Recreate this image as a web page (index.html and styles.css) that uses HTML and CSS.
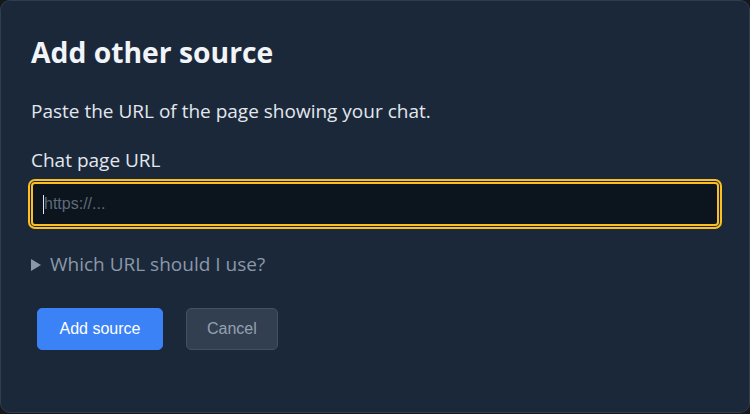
FILE: index.html
```html
<!DOCTYPE html>
<html lang="en">
<head>
<meta charset="utf-8">
<title>Add other source</title>
<link rel="stylesheet" href="styles.css">
</head>
<body>
<div class="dialog">
  <h2 class="title">Add other source</h2>
  <p class="desc">Paste the URL of the page showing your chat.</p>
  <label class="label" for="url">Chat page URL</label>
  <div class="field"><input id="url" class="input" type="text" placeholder="https://..."><span class="caret"></span></div>
  <details class="help">
    <summary class="help-summary">Which URL should I use?</summary>
  </details>
  <div class="actions">
    <button class="btn btn-primary" type="button">Add source</button>
    <button class="btn btn-secondary" type="button">Cancel</button>
  </div>
</div>
</body>
</html>
```
FILE: styles.css
```css
html, body {
  margin: 0;
  padding: 0;
  background: #16181c;
}
.dialog {
  box-sizing: border-box;
  width: 750px;
  height: 413px;
  background: #1b2839;
  border: 1px solid #2e3d50;
  border-radius: 10px;
  padding: 34px 30px 0 30px;
  display: flex;
  flex-direction: column;
  font-family: "Open Sans", "Noto Sans", sans-serif;
  color: #e5e9ef;
}
.title {
  margin: 0;
  font-size: 28.3px;
  line-height: 34px;
  font-weight: 700;
  color: #f1f4f8;
}
.desc {
  margin: 30px 0 0 0;
  font-size: 19px;
  line-height: 24px;
  color: #e2e7ee;
}
.label {
  margin-top: 25px;
  font-size: 19px;
  line-height: 24px;
  color: #e2e7ee;
}
.field {
  position: relative;
  margin-top: 10px;
}
.input {
  box-sizing: border-box;
  width: 100%;
  height: 44px;
  margin: 0;
  padding: 0 11px;
  background: #0c141e;
  border: 2px solid #fbbf24;
  border-radius: 4px;
  outline: 2.5px solid #fbbf24;
  outline-offset: 1.5px;
  font-family: "Liberation Sans", Arial, sans-serif;
  font-size: 16px;
  color: #e5e9ef;
}
.input::placeholder {
  color: #5f6b7a;
}
.caret {
  position: absolute;
  left: 12px;
  top: 13px;
  width: 1px;
  height: 19px;
  background: #e5e9ef;
}
.help {
  margin-top: 26px;
}
.help-summary {
  display: flex;
  align-items: center;
  list-style: none;
  font-size: 19px;
  line-height: 24px;
  color: #8b98aa;
  cursor: pointer;
}
.help-summary::-webkit-details-marker {
  display: none;
}
.help-summary::before {
  content: "";
  width: 0;
  height: 0;
  margin-right: 9px;
  margin-top: 1px;
  border-top: 6px solid transparent;
  border-bottom: 6px solid transparent;
  border-left: 10px solid #8b98aa;
}
.actions {
  display: flex;
  gap: 23px;
  margin-top: 32px;
  margin-left: 6px;
}
.btn {
  box-sizing: border-box;
  height: 42px;
  border-radius: 5px;
  font-family: "Liberation Sans", Arial, sans-serif;
  font-size: 16px;
  cursor: pointer;
}
.btn-primary {
  padding: 0 21.5px;
  background: #3b82f6;
  border: 1px solid #3b82f6;
  color: #ffffff;
}
.btn-secondary {
  padding: 0 20px;
  background: #323f50;
  border: 1px solid #415064;
  color: #95a1b1;
}
```
